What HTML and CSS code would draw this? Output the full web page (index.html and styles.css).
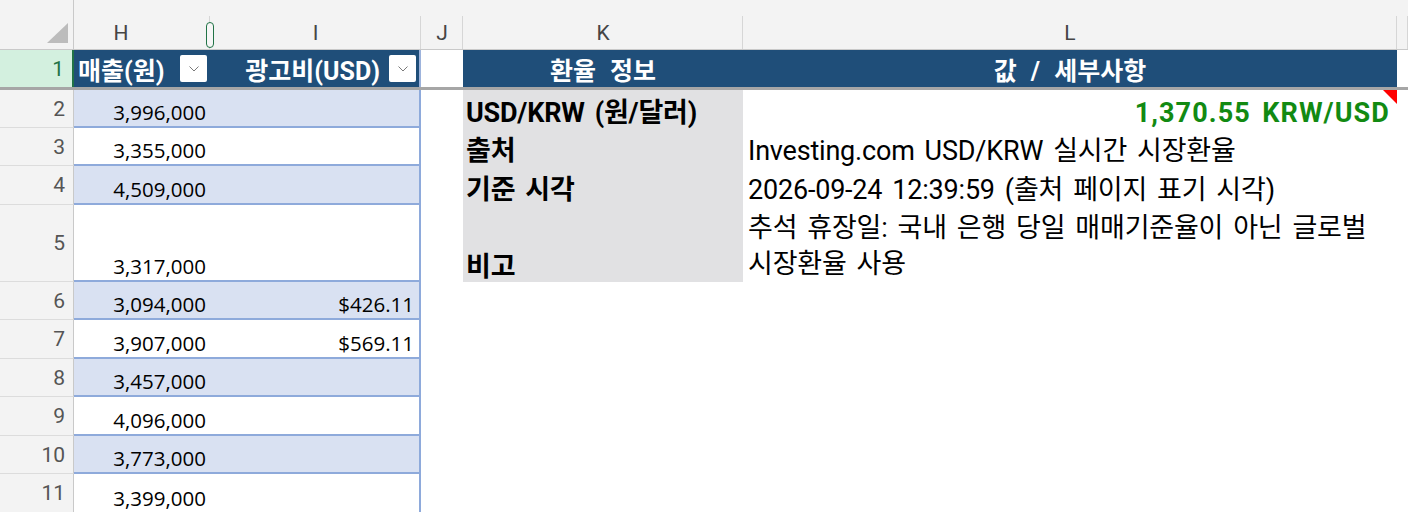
FILE: index.html
```html
<!DOCTYPE html>
<html lang="ko">
<head>
<meta charset="utf-8">
<title>환율 정보</title>
<link rel="stylesheet" href="styles.css">
</head>
<body>
<div class="sheet">
  <!-- column headers -->
  <div class="corner">
    <svg width="21" height="20" viewBox="0 0 21 20"><polygon points="21,0 21,20 0,20" fill="#bcbcbc"/></svg>
  </div>
  <div class="ch ch-h">H</div>
  <div class="ch">I</div>
  <div class="ch">J</div>
  <div class="ch">K</div>
  <div class="ch">L</div>
  <div class="ch"></div>

  <!-- row 1 -->
  <div class="rh sel">1</div>
  <div class="th th-h"><span>매출(원)</span><span class="fbtn"><svg width="10" height="6" viewBox="0 0 10 6"><polyline points="0.5,0.5 5,5 9.5,0.5" fill="none" stroke="#7a7a7a" stroke-width="1"/></svg></span></div>
  <div class="th th-i"><span>광고비(USD)</span><span class="fbtn"><svg width="10" height="6" viewBox="0 0 10 6"><polyline points="0.5,0.5 5,5 9.5,0.5" fill="none" stroke="#7a7a7a" stroke-width="1"/></svg></span></div>
  <div class="c"></div>
  <div class="th th-c">환율 정보</div>
  <div class="th th-c">값 / 세부사항</div>
  <div class="c"></div>

  <div class="freeze"></div>

  <!-- row 2 -->
  <div class="rh">2</div>
  <div class="c h band">3,996,000</div>
  <div class="c i band"></div>
  <div class="c"></div>
  <div class="c k">USD/KRW (원/달러)</div>
  <div class="c l rate">1,370.55 KRW/USD<span class="note"></span></div>
  <div class="c"></div>

  <!-- row 3 -->
  <div class="rh">3</div>
  <div class="c h">3,355,000</div>
  <div class="c i"></div>
  <div class="c"></div>
  <div class="c k">출처</div>
  <div class="c l">Investing.com USD/KRW 실시간 시장환율</div>
  <div class="c"></div>

  <!-- row 4 -->
  <div class="rh">4</div>
  <div class="c h band">4,509,000</div>
  <div class="c i band"></div>
  <div class="c"></div>
  <div class="c k">기준 시각</div>
  <div class="c l">2026-09-24 12:39:59 (출처 페이지 표기 시각)</div>
  <div class="c"></div>

  <!-- row 5 -->
  <div class="rh">5</div>
  <div class="c h">3,317,000</div>
  <div class="c i"></div>
  <div class="c"></div>
  <div class="c k">비고</div>
  <div class="c l wrap">추석 휴장일: 국내 은행 당일 매매기준율이 아닌 글로벌 시장환율 사용</div>
  <div class="c"></div>

  <!-- row 6 -->
  <div class="rh">6</div>
  <div class="c h band">3,094,000</div>
  <div class="c i band">$426.11</div>
  <div class="c"></div><div class="c"></div><div class="c"></div><div class="c"></div>

  <!-- row 7 -->
  <div class="rh">7</div>
  <div class="c h">3,907,000</div>
  <div class="c i">$569.11</div>
  <div class="c"></div><div class="c"></div><div class="c"></div><div class="c"></div>

  <!-- row 8 -->
  <div class="rh">8</div>
  <div class="c h band">3,457,000</div>
  <div class="c i band"></div>
  <div class="c"></div><div class="c"></div><div class="c"></div><div class="c"></div>

  <!-- row 9 -->
  <div class="rh">9</div>
  <div class="c h">4,096,000</div>
  <div class="c i"></div>
  <div class="c"></div><div class="c"></div><div class="c"></div><div class="c"></div>

  <!-- row 10 -->
  <div class="rh">10</div>
  <div class="c h band">3,773,000</div>
  <div class="c i band"></div>
  <div class="c"></div><div class="c"></div><div class="c"></div><div class="c"></div>

  <!-- row 11 -->
  <div class="rh last">11</div>
  <div class="c h last">3,399,000</div>
  <div class="c i last"></div>
  <div class="c"></div><div class="c"></div><div class="c"></div><div class="c"></div>

  <div class="handle"></div>
</div>
</body>
</html>
```

FILE: styles.css
```css
* { box-sizing: border-box; }

html, body {
  margin: 0;
  padding: 0;
  background: #ffffff;
}

body {
  font-family: Roboto, "Noto Sans CJK KR", sans-serif;
  color: #000;
}

.sheet {
  position: relative;
  width: 1408px;
  height: 512px;
  overflow: hidden;
  display: grid;
  grid-template-columns: 74px 136px 211px 42px 280px 654px 11px;
  grid-template-rows: 50px 37px 3px 38px 38px 39px 77px 38px 39px 38px 39px 38px 38px;
}

/* column header */
.corner {
  background: #f3f3f3;
  border-right: 1px solid #c9c9c9;
  border-bottom: 1px solid #c9c9c9;
  display: flex;
  justify-content: flex-end;
  align-items: flex-end;
  padding: 0 5px 6px 0;
}

.ch {
  background-color: #f3f3f3;
  background-image: linear-gradient(#d6d6d6, #d6d6d6);
  background-size: 1px 33px;
  background-position: right bottom;
  background-repeat: no-repeat;
  border-bottom: 1px solid #c9c9c9;
  display: flex;
  align-items: center;
  justify-content: center;
  padding-top: 16px;
  font-size: 21px;
  color: #454545;
}

.ch-h { padding-right: 42px; }

/* row header */
.rh {
  background: #f3f3f3;
  border-right: 1px solid #c9c9c9;
  border-bottom: 1px solid #dcdcdc;
  display: flex;
  align-items: center;
  justify-content: flex-end;
  padding-right: 8px;
  font-size: 21px;
  color: #555555;
}

.rh.sel {
  background: #d3f0df;
  color: #217346;
  border-right: 2px solid #217346;
  border-bottom: none;
}

.rh.last { border-bottom: none; }

.freeze {
  grid-column: 1 / -1;
  background: #a6a6a6;
}

/* table header row */
.th {
  background: #1f4e79;
  color: #ffffff;
  font-weight: 700;
  font-size: 25px;
  display: flex;
  align-items: center;
}

.th-h {
  justify-content: space-between;
  padding: 0 3px 0 4px;
}

.th-i {
  justify-content: flex-end;
  gap: 9px;
  padding-right: 3px;
  border-right: 2px solid #9db3dc;
}

.th-c {
  justify-content: center;
  word-spacing: 8px;
}

.fbtn {
  width: 27px;
  height: 27px;
  background: #ffffff;
  border-radius: 2px;
  display: flex;
  align-items: center;
  justify-content: center;
}

/* cells */
.c {
  position: relative;
  background: #ffffff;
  display: flex;
  align-items: flex-end;
  font-size: 27px;
  line-height: 30px;
  letter-spacing: -0.2px;
  word-spacing: 3.5px;
  padding-bottom: 0;
  white-space: nowrap;
}

.c.h, .c.i {
  font-family: "Open Sans", sans-serif;
  font-size: 20.5px;
  line-height: 28px;
  letter-spacing: 0;
  word-spacing: 0;
  justify-content: flex-end;
  border-bottom: 2px solid #8eaadb;
}

.c.h { padding-right: 4px; }

.c.i {
  padding-right: 5px;
  border-right: 2px solid #8eaadb;
}

.c.last { border-bottom: none; }

.band { background: #d9e1f2; }

.c.k {
  background: #e1e1e3;
  font-weight: 700;
  padding-left: 3px;
}

.c.l { padding-left: 5px; }

.c.rate {
  justify-content: flex-end;
  padding-right: 7px;
  color: #128a12;
  font-weight: 700;
  letter-spacing: 1.1px;
}

.c.wrap {
  white-space: normal;
  word-break: keep-all;
  line-height: 36px;
}

.note {
  position: absolute;
  top: 0;
  right: 0;
  width: 0;
  height: 0;
  border-top: 14px solid #ff0000;
  border-left: 14px solid transparent;
}

.handle {
  position: absolute;
  left: 206px;
  top: 22px;
  width: 8px;
  height: 26px;
  border: 1.5px solid #217346;
  border-radius: 4px;
  background: #f6f6f6;
}
```
